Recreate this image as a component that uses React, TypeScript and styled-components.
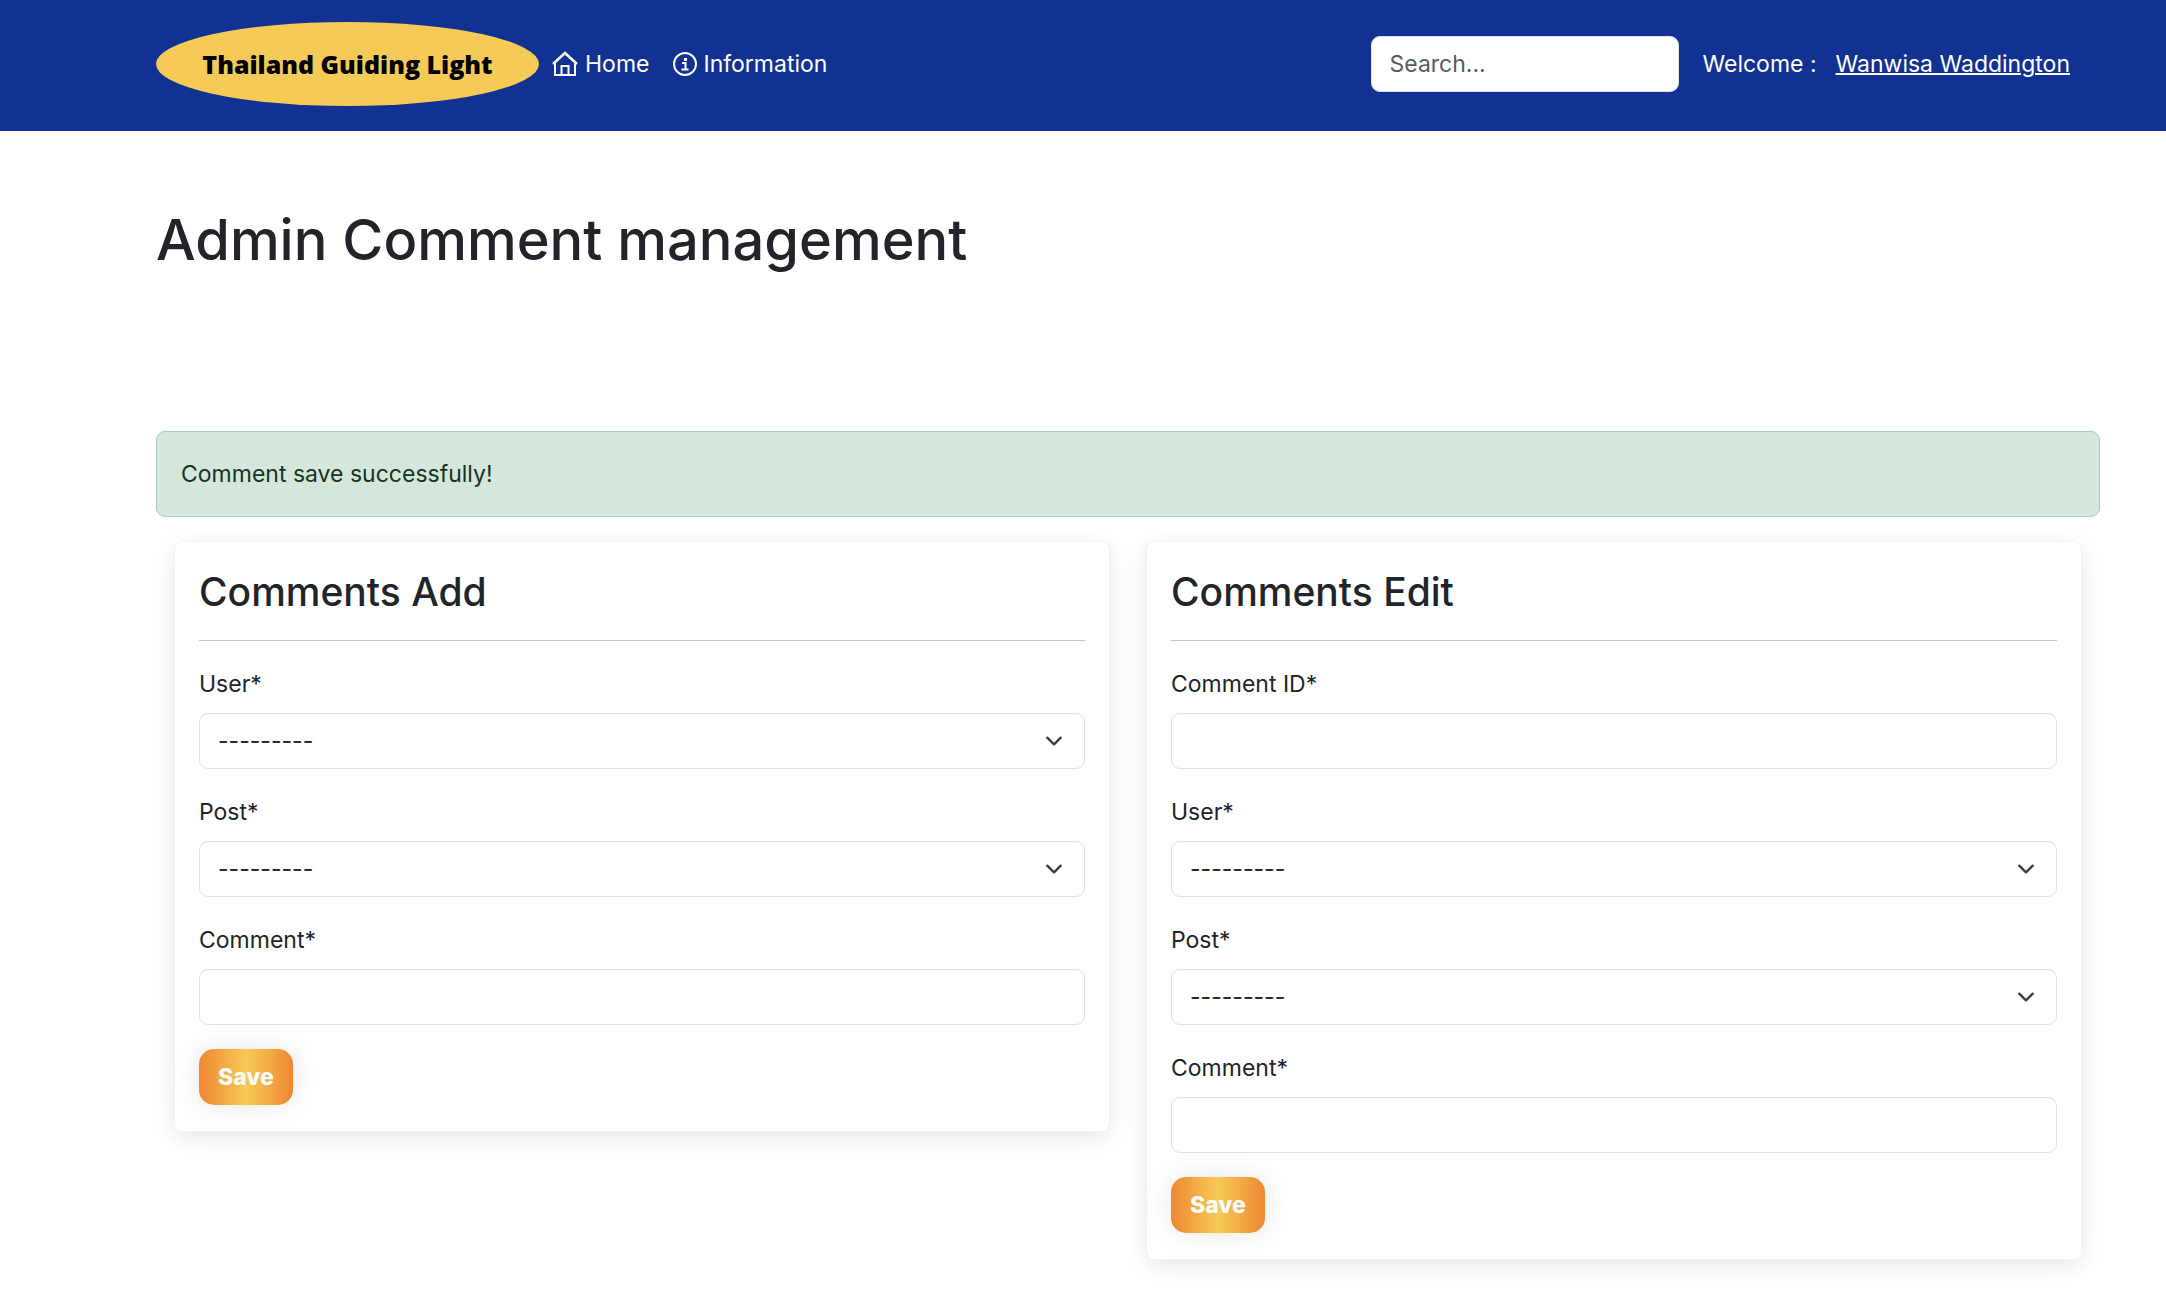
import React, { useId } from "react";
import styled, { createGlobalStyle, css } from "styled-components";

const Global = createGlobalStyle`
  *, *::before, *::after { box-sizing: border-box; }
  body {
    margin: 0;
    background: #fff;
    color: #212529;
    font-family: Inter, "Liberation Sans", sans-serif;
    font-size: 23px;
    line-height: 36px;
  }
`;

const Navbar = styled.header`
  display: flex;
  align-items: center;
  justify-content: space-between;
  padding: 22px 96px 25px 156px;
  background: #113293;
  color: #fff;
`;

const NavGroup = styled.nav`
  display: flex;
  align-items: center;
`;

const Brand = styled.a`
  display: flex;
  align-items: center;
  justify-content: center;
  min-width: 383px;
  height: 84px;
  margin-right: 12px;
  border-radius: 50%;
  background: #f6ca57;
  color: #000;
  font-family: "Open Sans", "Noto Sans", sans-serif;
  font-size: 25px;
  font-weight: 800;
  text-decoration: none;
`;

const NavLink = styled.a`
  display: flex;
  align-items: center;
  gap: 6px;
  margin-right: 24px;
  color: #fff;
  text-decoration: none;
  svg { display: block; }
`;

const Account = styled.div`
  display: flex;
  align-items: center;
`;

const control = css`
  display: block;
  width: 100%;
  height: 56px;
  padding: 8px 18px;
  border: 1px solid #dee2e6;
  border-radius: 9px;
  background-color: #fff;
  color: #212529;
  font: inherit;
  appearance: none;
`;

const Input = styled.input`
  ${control}
  &::placeholder { color: #595c5f; opacity: 1; }
`;

const SearchForm = styled.form`
  width: 308px;
  margin-right: 24px;
`;

const ProfileLink = styled.a`
  margin-left: 19px;
  color: #fff;
  text-decoration: underline;
  text-decoration-thickness: 2px;
`;

const Main = styled.main`
  padding: 73px 66px 42px 156px;
`;

const PageTitle = styled.h1`
  margin: 0 0 155px;
  font-size: 56px;
  line-height: 72px;
  font-weight: 500;
`;

const Alert = styled.div`
  margin-bottom: 24px;
  padding: 24px;
  border: 1px solid #a9cfbc;
  border-radius: 9px;
  background: #d5e6dd;
  color: #16351f;
`;

const Columns = styled.div`
  display: grid;
  grid-template-columns: 1fr 1fr;
  align-items: start;
  gap: 36px;
  padding: 0 18px;
`;

const Card = styled.section`
  padding: 24px 24px 26px;
  border: 1px solid #f3f3f3;
  border-radius: 9px;
  background: #fff;
  box-shadow: 0 6px 24px rgba(0, 0, 0, 0.1);
`;

const CardTitle = styled.h2`
  margin: 0;
  padding-bottom: 23px;
  border-bottom: 1px solid #c7c8c9;
  font-size: 39px;
  line-height: 51px;
  font-weight: 500;
`;

const Form = styled.form`
  display: flex;
  flex-direction: column;
  align-items: flex-start;
  gap: 24px;
  padding-top: 24px;
`;

const FieldBox = styled.div`
  width: 100%;
`;

const Label = styled.label`
  display: block;
  margin-bottom: 10px;
  line-height: 38px;
`;

const SelectBox = styled.div`
  display: grid;
  align-items: center;
  > * { grid-area: 1 / 1; }
  svg {
    justify-self: end;
    margin-right: 22px;
    pointer-events: none;
  }
`;

const Select = styled.select`
  ${control}
`;

const SaveButton = styled.button`
  height: 56px;
  padding: 0 19px;
  border: 0;
  border-radius: 15px;
  background: linear-gradient(90deg, #ef8733, #f6ca57 50%, #ef8733);
  box-shadow: 0 0 30px rgba(0, 0, 0, 0.1);
  color: #fff;
  font: inherit;
  font-weight: 800;
`;

type FieldKind = "select" | "text";

function Field({ label, kind }: { label: string; kind: FieldKind }) {
  const id = useId();
  return (
    <FieldBox>
      <Label htmlFor={id}>{label}*</Label>
      {kind === "text" ? (
        <Input id={id} type="text" />
      ) : (
        <SelectBox>
          <Select id={id}>
            <option>---------</option>
          </Select>
          <svg width="18" height="18" viewBox="0 0 16 16" fill="none" stroke="#343a40" strokeWidth="2" strokeLinecap="round" strokeLinejoin="round">
            <path d="m2 5 6 6 6-6" />
          </svg>
        </SelectBox>
      )}
    </FieldBox>
  );
}

function CommentCard({ title, fields }: { title: string; fields: [string, FieldKind][] }) {
  return (
    <Card>
      <CardTitle>{title}</CardTitle>
      <Form onSubmit={(e) => e.preventDefault()}>
        {fields.map(([label, kind]) => (
          <Field key={label} label={label} kind={kind} />
        ))}
        <SaveButton>Save</SaveButton>
      </Form>
    </Card>
  );
}

export default function App() {
  return (
    <>
      <Global />
      <Navbar>
        <NavGroup>
          <Brand href="#">Thailand Guiding Light</Brand>
          <NavLink href="#home">
            <svg width="28" height="26" viewBox="0 0 28 26" fill="none" stroke="#fff" strokeWidth="2">
              <path d="M2 13 14 2l12 11" strokeWidth="2.5" />
              <path d="M4 11v13h20V11M10.500 24v-9h7v9" />
            </svg>
            Home
          </NavLink>
          <NavLink href="#information">
            <svg width="24" height="24" viewBox="0 0 24 24" fill="none" stroke="#fff" strokeWidth="2">
              <circle cx="12" cy="12" r="11" />
              <path d="M9 11H12.500V17M8.500 17.500H15.500" />
              <path d="M11 7.500h3" strokeWidth="3" />
            </svg>
            Information
          </NavLink>
        </NavGroup>
        <Account>
          <SearchForm role="search" onSubmit={(e) => e.preventDefault()}>
            <Input type="search" placeholder="Search..." aria-label="Search" />
          </SearchForm>
          <span>Welcome :</span>
          <ProfileLink href="#profile">Wanwisa Waddington</ProfileLink>
        </Account>
      </Navbar>
      <Main>
        <PageTitle>Admin Comment management</PageTitle>
        <Alert role="alert">Comment save successfully!</Alert>
        <Columns>
          <CommentCard title="Comments Add" fields={[["User", "select"], ["Post", "select"], ["Comment", "text"]]} />
          <CommentCard
            title="Comments Edit"
            fields={[["Comment ID", "text"], ["User", "select"], ["Post", "select"], ["Comment", "text"]]}
          />
        </Columns>
      </Main>
    </>
  );
}
